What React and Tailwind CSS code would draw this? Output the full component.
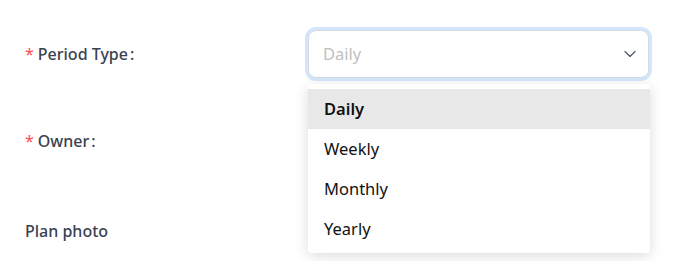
import { ChevronDown } from 'lucide-react';

const options = ['Daily', 'Weekly', 'Monthly', 'Yearly'];

function Label({ required, children }) {
  return (
    <div className="w-[283px] shrink-0 flex items-center text-[16px] font-medium text-[#3a4150]">
      {required && <span className="text-[#ff4d4f] mr-[4px] font-normal">*</span>}
      <span>{children}</span>
      {required && <span className="ml-[2px]">:</span>}
    </div>
  );
}

export default function App() {
  return (
    <div className="w-[695px] h-[261px] bg-white overflow-hidden font-['Segoe_UI','Noto_Sans',sans-serif]">
      <div className="pl-[25px] pt-[30px]">
        {/* Period Type */}
        <div className="flex items-center h-[48px] relative">
          <Label required>Period Type</Label>
          <div className="w-[341px] h-[48px] rounded-[8px] border border-[#d6dbe1] ring-[3px] ring-[#d3e6fc] bg-white flex items-center justify-between pl-[14px] pr-[8px]">
            <span className="text-[16.5px] text-[#bfbfbf]">Daily</span>
            <ChevronDown size={20} strokeWidth={1.4} className="text-[#4b5563]" />
          </div>

          {/* dropdown menu */}
          <div className="absolute left-[283px] top-[54px] w-[342px] bg-white rounded-[4px] pt-[5px] pb-[4px] shadow-[0_3px_14px_rgba(0,0,0,0.14)] z-10">
            {options.map((opt, i) => (
              <div
                key={opt}
                className={`h-[40px] flex items-center px-[16px] text-[16.5px] text-[#111] ${i === 0 ? 'bg-[#e8e8e8] font-semibold' : ''}`}
              >
                {opt}
              </div>
            ))}
          </div>
        </div>

        {/* Owner */}
        <div className="flex items-center h-[48px] mt-[39px]">
          <Label required>Owner</Label>
        </div>

        {/* Plan photo */}
        <div className="flex items-center h-[48px] mt-[42px]">
          <Label>Plan photo</Label>
        </div>
      </div>
    </div>
  );
}
